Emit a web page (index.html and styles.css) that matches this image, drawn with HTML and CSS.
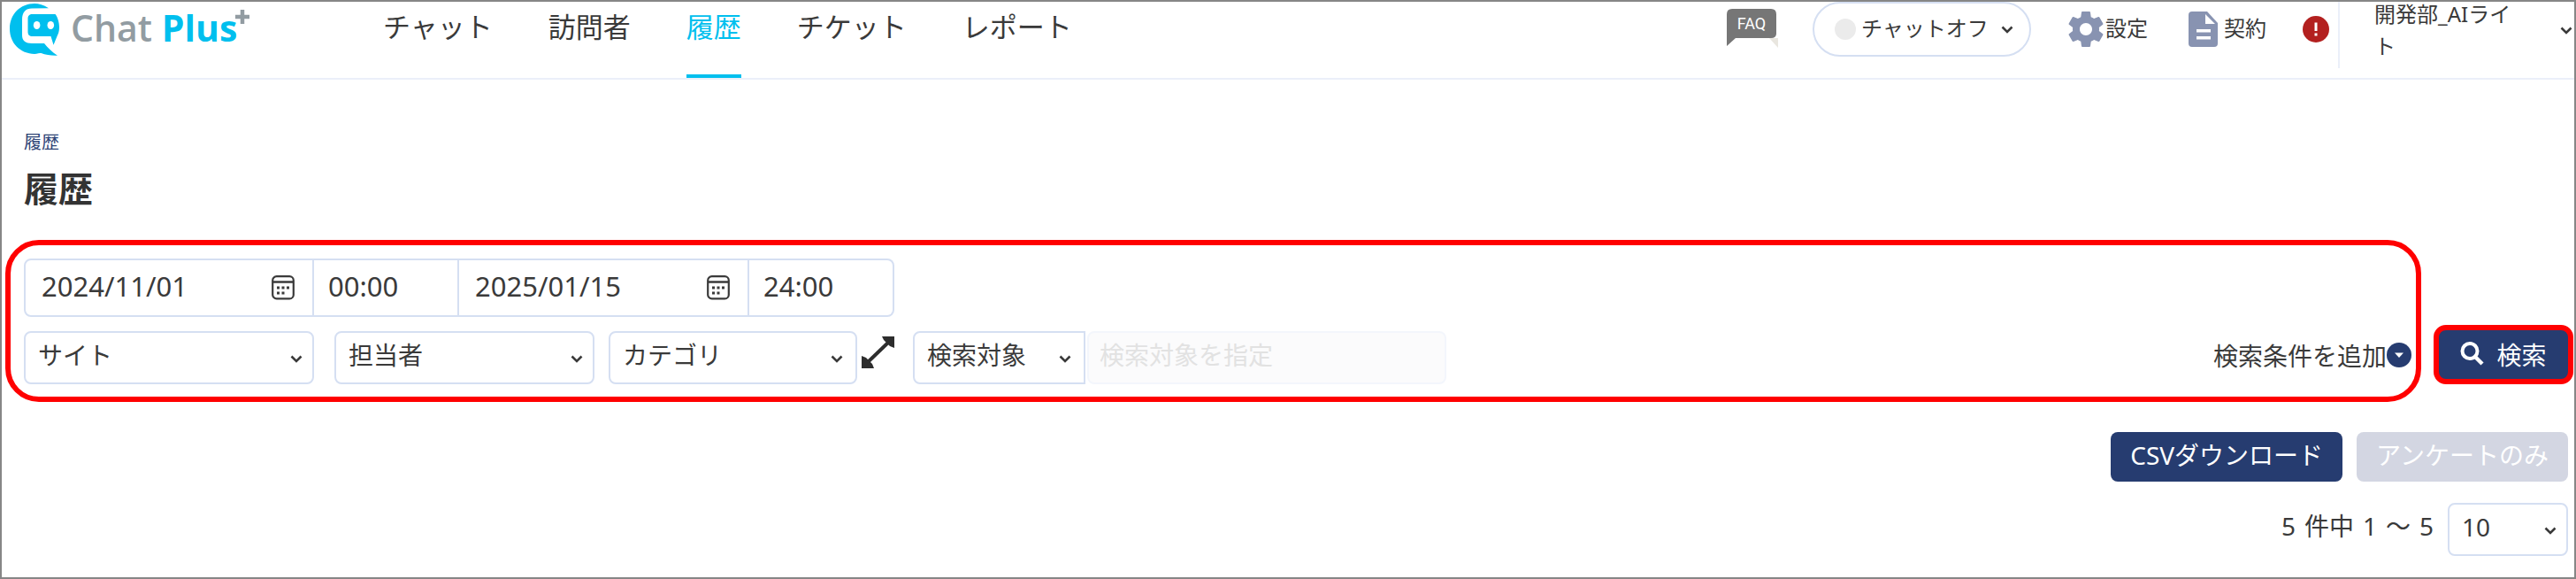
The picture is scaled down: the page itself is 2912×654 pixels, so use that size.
FILE: index.html
```html
<!DOCTYPE html>
<html lang="ja">
  <head>
    <meta charset="UTF-8">
    <title>履歴 | Chat Plus</title>
    <link rel="stylesheet" href="styles.css">
  </head>
  <body>
    <!-- shared icons -->
    <svg class="sprite" aria-hidden="true">
      <symbol id="chevron" viewBox="0 0 14 9">
        <path d="M1.5 1.5 L7 7 L12.5 1.5" fill="none" stroke="currentColor" stroke-width="2.6"/>
      </symbol>
      <symbol id="calendar" viewBox="0 0 26 28">
        <rect x="1.2" y="1.2" width="23.6" height="25.2" rx="4.5" fill="none" stroke="currentColor" stroke-width="2.2"/>
        <path d="M1 7.500H25" stroke="currentColor" stroke-width="2.500"/>
        <path d="M6 12.500h3v3h-3zM11.500 12.500h3v3h-3zM17 12.500h3v3h-3zM6 18.500h3v3h-3zM11.500 18.500h3v3h-3z" fill="currentColor"/>
      </symbol>
    </svg>

    <header class="header">
      <a class="logo" href="#" aria-label="Chat Plus">
        <svg class="logo-mark" viewBox="0 0 57 60">
          <path fill="#00bfee" d="M44 5.300C38 1.500 33 0 28 0C12 0 0 12 0 28.500C0 45 12 56.500 28 57C31 56.500 34 56 35.500 56C41 58 47 59 54 58.700C48 55 43 50 39 45H25C18 45 14 42 14 36V18C14 10 18 5.500 25 5.500Z"/>
          <path fill="#00bfee" d="M26 12H51.500C54 15 56 21 56 27C56 31 55 34 53.500 37L49.500 46.700L46.500 37H26C22 37 20.500 35 20.500 32V17C20.500 14 22 12 26 12Z"/>
          <ellipse cx="30.600" cy="24.500" rx="3.800" ry="4.500" fill="#fff"/>
          <ellipse cx="46.300" cy="24.500" rx="3.800" ry="4.500" fill="#fff"/>
        </svg>
        <span class="logo-text">Chat <b>Plus</b></span>
        <svg class="logo-plus" viewBox="0 0 16 16">
          <path d="M8 0V16M0 8H16" stroke="#929ca2" stroke-width="4.500"/>
        </svg>
      </a>

      <nav class="nav">
        <a href="#">チャット</a>
        <a href="#">訪問者</a>
        <a href="#" class="active">履歴</a>
        <a href="#">チケット</a>
        <a href="#">レポート</a>
      </nav>

      <div class="tools">
        <a class="faq" href="#" aria-label="FAQ">
          <svg viewBox="0 0 58 44">
            <path d="M48 33H58V44Z" fill="#e9e6df"/>
            <path d="M6 0H50Q56 0 56 6V28Q56 33 50 33H10L0 42V6Q0 0 6 0Z" fill="#767676"/>
          </svg>
          <span>FAQ</span>
        </a>
        <button class="status" type="button">
          <span class="status-dot"></span>
          <span class="status-text">チャットオフ</span>
          <svg class="chevron"><use href="#chevron"/></svg>
        </button>
        <a class="tool tool-setting" href="#">
          <svg width="40" height="40" viewBox="2 2 20 20">
            <path fill="#8893b1" d="M19.430 12.980c.04-.32.07-.64.07-.98s-.03-.66-.07-.98l2.110-1.650c.19-.15.24-.42.12-.64l-2-3.460c-.12-.22-.39-.3-.61-.22l-2.490 1c-.52-.4-1.080-.73-1.690-.98l-.38-2.650C14.460 2.180 14.250 2 14 2h-4c-.25 0-.46.18-.49.42l-.38 2.650c-.61.25-1.170.59-1.690.98l-2.490-1c-.23-.09-.49 0-.61.22l-2 3.460c-.13.22-.07.49.12.64l2.110 1.650c-.04.32-.07.65-.07.98s.03.66.07.98l-2.110 1.650c-.19.15-.24.42-.12.64l2 3.460c.12.22.39.3.61.22l2.490-1c.52.4 1.080.73 1.690.98l.38 2.650c.03.24.24.42.49.42h4c.25 0 .46-.18.49-.42l.38-2.650c.61-.25 1.170-.59 1.690-.98l2.490 1c.23.09.49 0 .61-.22l2-3.460c.12-.22.07-.49-.12-.64zM12 15.500c-1.930 0-3.500-1.570-3.500-3.500s1.570-3.500 3.500-3.500 3.500 1.570 3.500 3.500-1.570 3.500-3.500 3.500z"/>
          </svg>
          <span>設定</span>
        </a>
        <a class="tool tool-contract" href="#">
          <svg width="34" height="40" viewBox="0 0 34 40">
            <path fill="#8893b1" d="M4 0H21L33 13V36Q33 40 29 40H4Q0 40 0 36V4Q0 0 4 0Z"/>
            <path fill="#fff" d="M19 3V14H30ZM9 20H25V23.500H9ZM9 28H25V31.500H9Z"/>
          </svg>
          <span>契約</span>
        </a>
        <svg class="alert" viewBox="0 0 30 30">
          <circle cx="15" cy="15" r="15" fill="#b3201f"/>
          <path d="M15 7.500V17M15 19.500V22.500" stroke="#fff" stroke-width="3"/>
        </svg>
        <button class="user" type="button">
          <span>開発部_AIライト</span>
          <svg class="chevron"><use href="#chevron"/></svg>
        </button>
      </div>
    </header>

    <main>
      <div class="title-area">
        <a class="breadcrumb" href="#">履歴</a>
        <h1>履歴</h1>
      </div>

      <form class="search-area">
        <div class="conditions">
          <div class="period">
            <label class="date">
              <input type="text" value="2024/11/01" aria-label="開始日">
              <svg class="calendar"><use href="#calendar"/></svg>
            </label>
            <input class="time" type="text" value="00:00" aria-label="開始時刻">
            <label class="date">
              <input type="text" value="2025/01/15" aria-label="終了日">
              <svg class="calendar"><use href="#calendar"/></svg>
            </label>
            <input class="time" type="text" value="24:00" aria-label="終了時刻">
          </div>

          <div class="filters">
            <div class="select site">
              <select aria-label="サイト"><option>サイト</option></select>
              <svg class="chevron"><use href="#chevron"/></svg>
            </div>
            <div class="select operator">
              <select aria-label="担当者"><option>担当者</option></select>
              <svg class="chevron"><use href="#chevron"/></svg>
            </div>
            <div class="select category">
              <select aria-label="カテゴリ"><option>カテゴリ</option></select>
              <svg class="chevron"><use href="#chevron"/></svg>
            </div>
            <button class="expand" type="button" aria-label="カテゴリを拡大">
              <svg viewBox="0 0 37 36">
                <path d="M6 30L31 6" stroke="#2d2d2d" stroke-width="4"/>
                <path d="M23 0H37V13L32 11L25 4ZM0 22V36H14L12 31L5 24Z" fill="#2d2d2d"/>
              </svg>
            </button>
            <div class="select target">
              <select aria-label="検索対象"><option>検索対象</option></select>
              <svg class="chevron"><use href="#chevron"/></svg>
            </div>
            <input class="keyword" type="text" placeholder="検索対象を指定" aria-label="検索対象を指定" disabled>
            <button class="add" type="button">
              検索条件を追加
              <svg viewBox="0 0 28 28">
                <circle cx="14" cy="14" r="14" fill="#263c70"/>
                <path d="M9 11.500H19L14 17Z" fill="#fff"/>
              </svg>
            </button>
          </div>
        </div>

        <button class="search" type="submit">
          <svg viewBox="0 0 27 27">
            <circle cx="11" cy="10.500" r="8.500" fill="none" stroke="#fff" stroke-width="4"/>
            <path d="M17 17L25 25" stroke="#fff" stroke-width="4.500"/>
          </svg>
          検索
        </button>
      </form>

      <div class="actions">
        <button class="btn" type="button">CSVダウンロード</button>
        <button class="btn" type="button" disabled>アンケートのみ</button>
      </div>

      <div class="pager">
        <div class="count">
          <span>5</span>
          <span>件中</span>
          <span>1</span>
          <span>～</span>
          <span>5</span>
        </div>
        <div class="select per-page">
          <select aria-label="表示件数"><option>10</option></select>
          <svg class="chevron"><use href="#chevron"/></svg>
        </div>
      </div>
    </main>
  </body>
</html>
```
FILE: styles.css
```css
* {
  box-sizing: border-box;
}
body {
  margin: 0;
  min-height: 100vh;
  border: 2px solid #868686;
  background: #fff;
  color: #3a3a3a;
  font-family: "Noto Sans", "Noto Sans CJK JP", sans-serif;
  font-size: 28px;
}
a {
  color: inherit;
  text-decoration: none;
}
button, input, select {
  margin: 0;
  font: inherit;
  color: inherit;
}
button {
  padding: 0;
  border: 0;
  background: none;
  white-space: nowrap;
}
svg {
  display: block;
  flex: none;
}
.sprite {
  position: absolute;
  width: 0;
  height: 0;
}
.chevron {
  width: 14px;
  height: 9px;
}

/* header */
.header {
  display: flex;
  align-items: flex-start;
  height: 88px;
  border-bottom: 2px solid #ebeff9;
}
.logo {
  display: flex;
  align-items: flex-start;
  width: 422px;
  padding: 2px 0 0 9px;
}
.logo-mark {
  width: 57px;
  height: 60px;
}
.logo-text {
  margin-left: 12px;
  color: #929ca2;
  font-family: "Open Sans", sans-serif;
  font-size: 41px;
  font-weight: 600;
  line-height: 54px;
}
.logo-text b {
  color: #00bfee;
  font-weight: 700;
}
.logo-plus {
  width: 16px;
  height: 16px;
  margin: 7px 0 0 -2px;
}
.nav {
  display: flex;
  gap: 63px;
  padding-left: 9px;
}
.nav a {
  height: 86px;
  border-bottom: 4px solid transparent;
  font-size: 31px;
  line-height: 56px;
  white-space: nowrap;
}
.nav .active {
  color: #00bfee;
  border-bottom-color: #00bfee;
}
.tools {
  display: flex;
  align-items: flex-start;
  margin-left: auto;
  font-size: 24px;
}
.faq {
  position: relative;
  width: 58px;
  margin: 8px 39px 0 0;
}
.faq span {
  position: absolute;
  top: 0;
  left: 0;
  width: 56px;
  color: #fff;
  font-family: Roboto, sans-serif;
  font-size: 18px;
  line-height: 34px;
  text-align: center;
}
.status {
  display: flex;
  align-items: center;
  width: 247px;
  height: 62px;
  padding: 0 18px 0 23px;
  border: 2px solid #d5dff2;
  border-radius: 31px;
}
.status-dot {
  width: 24px;
  height: 24px;
  margin-right: 6px;
  border-radius: 50%;
  background: #ebebeb;
}
.status-text,
.tool span {
  padding-bottom: 5px;
}
.status .chevron {
  margin-left: auto;
}
.tool {
  display: flex;
  align-items: center;
  height: 62px;
  white-space: nowrap;
}
.tool-setting {
  gap: 2px;
  margin-left: 42px;
}
.tool-contract {
  gap: 6px;
  margin-left: 46px;
}
.alert {
  width: 30px;
  height: 30px;
  margin: 16px 10px 0 41px;
}
.user {
  display: flex;
  align-items: flex-start;
  justify-content: space-between;
  width: 267px;
  height: 75px;
  padding: 0 2px 0 39px;
  border-left: 2px solid #ebeff9;
  line-height: 36px;
  text-align: left;
}
.user span {
  width: 164px;
  margin-top: -4px;
  white-space: normal;
  word-break: break-all;
}
.user .chevron {
  margin-top: 28px;
}

/* title */
.title-area {
  padding: 56px 25px 0;
}
.breadcrumb {
  display: block;
  color: #2f4577;
  font-size: 20px;
  line-height: 30px;
}
h1 {
  margin: 9px 0 0;
  color: #333;
  font-size: 39px;
  line-height: 56px;
}

/* search conditions */
.search-area {
  display: flex;
  align-items: flex-end;
  gap: 14px;
  padding: 30px 1px 0 4px;
}
.conditions {
  flex: 1;
  padding: 15px 5px 14px 15px;
  border: 6px solid #f00;
  border-radius: 38px;
}
.period {
  display: flex;
}
.period > * {
  height: 66px;
  border: 2px solid #d5dff2;
  border-left-width: 0;
  background: #fff;
}
.period > :first-child {
  border-left-width: 2px;
  border-radius: 8px 0 0 8px;
}
.period > :last-child {
  border-radius: 0 8px 8px 0;
}
.period input {
  padding: 0 0 4px 18px;
  font-size: 31px;
}
.date {
  display: flex;
  align-items: center;
  width: 328px;
  padding-right: 20px;
}
.date input {
  flex: 1;
  min-width: 0;
  border: 0;
  background: none;
}
.calendar {
  width: 26px;
  height: 28px;
}
.period .time {
  width: 164px;
  padding-left: 16px;
}
.filters {
  display: flex;
  align-items: flex-start;
  margin-top: 16px;
}
.select {
  position: relative;
  height: 60px;
}
.select select {
  display: block;
  width: 100%;
  height: 100%;
  padding: 0 32px 6px 14px;
  border: 2px solid #d5dff2;
  border-radius: 8px;
  background: #fff;
  appearance: none;
}
.select .chevron {
  position: absolute;
  top: 27px;
  right: 13px;
  pointer-events: none;
}
.site {
  width: 328px;
}
.operator {
  width: 294px;
  margin-left: 23px;
}
.category {
  width: 281px;
  margin-left: 16px;
}
.category .chevron,
.target .chevron {
  right: 16px;
}
.expand {
  width: 37px;
  margin: 6px 21px 0 5px;
}
.target {
  width: 195px;
}
.target select {
  border-radius: 8px 0 0 8px;
}
.keyword {
  width: 406px;
  height: 60px;
  margin-left: 2px;
  padding: 0 12px 6px;
  border: 2px solid #f3f6fc;
  border-radius: 8px;
  background: #fbfbfc;
}
.keyword::placeholder {
  color: #e2e2e2;
  opacity: 1;
}
.add {
  display: flex;
  align-items: center;
  height: 54px;
  margin-left: auto;
}
.add svg {
  width: 28px;
  height: 28px;
}
.search {
  display: flex;
  align-items: center;
  justify-content: center;
  gap: 14px;
  width: 158px;
  height: 67px;
  margin-bottom: 20px;
  padding-bottom: 2px;
  border: 6px solid #f00;
  border-radius: 14px;
  background: #263c70;
  color: #fff;
}
.search svg {
  width: 27px;
  height: 27px;
}

/* result actions */
.actions {
  display: flex;
  justify-content: flex-end;
  gap: 16px;
  padding: 34px 7px 0;
}
.btn {
  height: 56px;
  padding: 0 22px 6px;
  border-radius: 8px;
  background: #263c70;
  color: #fff;
}
.btn:disabled {
  background: #d3d6e2;
}
.pager {
  display: flex;
  justify-content: flex-end;
  gap: 16px;
  padding: 24px 7px 0;
}
.count {
  display: flex;
  gap: 10px;
  line-height: 52px;
}
.per-page {
  width: 136px;
}
```
